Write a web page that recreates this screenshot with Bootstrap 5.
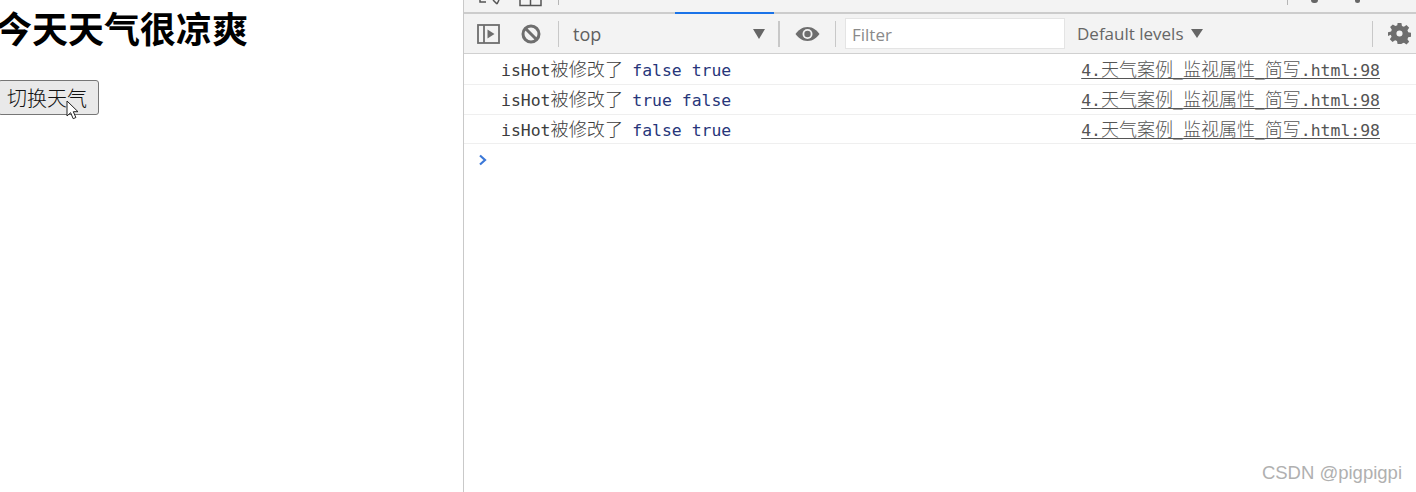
<!DOCTYPE html>
<html lang="zh">
<head>
<meta charset="utf-8">
<title>isHot</title>
<link href="https://cdn.jsdelivr.net/npm/bootstrap@5.3.0/dist/css/bootstrap.min.css" rel="stylesheet">
<style>
html,body{height:492px;overflow:hidden;background:#fff}
body{font-family:"Liberation Sans","Noto Sans CJK SC",sans-serif;color:#000}
.page-pane{width:464px;height:492px;border-right:1px solid #c9c9c9;overflow:hidden;flex:none}
.weather-title{font-size:36px;font-weight:700;line-height:44px;margin:5px 0 0 -4px;white-space:nowrap;font-family:"Noto Sans CJK SC",sans-serif}
.switch-btn{display:inline-block;position:relative;margin:31px 0 0 -2px;width:101px;height:35px;background:#e9e9e9;border:1px solid #767676;border-radius:3px;font-size:20px;line-height:32px;padding:0 0 0 8px;text-align:left;color:#111;font-family:"Noto Sans CJK SC",sans-serif;font-weight:300}
.mouse-arrow{position:absolute;left:67px;top:19px}
.dev-pane{height:492px;position:relative;min-width:0}
.tab-strip{height:14px;background:#f3f3f3;border-bottom:2px solid #ccc;position:relative;flex:none}
.tab-active{position:absolute;left:211px;width:99px;bottom:-2px;height:2px;background:#1a73e8}
.strip-ico{position:absolute;top:0}
.strip-sep{position:absolute;top:0;width:1px;height:5px;background:#b5b5b5}
.strip-dot{position:absolute;top:0;height:3px;background:#666;border-radius:0 0 3px 3px}
.tool-strip{height:40px;background:#f3f3f3;border-bottom:1px solid #d0d0d0;color:#5f5f5f;font-size:18px;font-family:"Open Sans","Noto Sans",sans-serif;flex:none;position:relative}
.tool-sep{width:1px;height:26px;background:#c8c8c8;flex:none}
.tool-ico{flex:none;display:block}
.ctx-select{width:212px;flex:none;padding:0 6px 0 14px;line-height:24px}
.tri-down{width:0;height:0;border-left:6px solid transparent;border-right:6px solid transparent;border-top:10px solid #666;flex:none}
.filter-box{width:220px;height:31px;background:#fff;border:1px solid #e4e4e4;color:#8a8a8a;padding:0 6px;line-height:31px;flex:none;font-size:17px;margin-left:9px}
.level-pick{flex:none;font-size:17px;line-height:24px;color:#666}
.log-row{border-bottom:1px solid #efefef;font-family:"DejaVu Sans Mono","Noto Sans CJK SC",monospace;font-size:16.45px;color:#3c3c3c;padding-left:37px;padding-right:36px;white-space:nowrap}
.row-a{height:31px;line-height:29px}
.row-b{height:30px;line-height:27px}
.row-c{height:29px;line-height:27px}
.cjk-run{font-family:"Noto Sans CJK SC",sans-serif;font-size:18.2px;font-weight:300}
.val-run{color:#27367a;margin-left:9px}
.val-run + .val-run{margin-left:9.9px}
.src-link{color:#555;text-decoration:underline;text-underline-offset:2px}
.src-cjk{font-family:"Noto Sans CJK SC",sans-serif;font-size:18px;font-weight:300}
.prompt-row{height:32px;padding-left:14px}
.csdn-mark{position:absolute;right:14px;bottom:7px;color:#b0b0b0;font-size:18.5px;line-height:24px;font-family:"Liberation Sans",sans-serif}
</style>
</head>
<body>
<div class="d-flex">
  <div class="page-pane">
    <h1 class="weather-title">今天天气很凉爽</h1>
    <button type="button" class="switch-btn">切换天气
      <svg class="mouse-arrow" width="15" height="21" viewBox="0 0 15 21"><path d="M1 1v15l3.600-3.300 2.600 6 2.700-1.200-2.600-5.800H12z" fill="#fff" stroke="#222" stroke-width="1"/></svg>
    </button>
  </div>
  <div class="dev-pane flex-grow-1 d-flex flex-column">
    <div class="tab-strip">
      <svg class="strip-ico" style="left:15px" width="22" height="6" viewBox="0 0 22 6"><path d="M1 0v2h6M14 0l4 4M20 0l-2 4" fill="none" stroke="#555" stroke-width="1.500"/></svg>
      <svg class="strip-ico" style="left:55px" width="23" height="7" viewBox="0 0 23 7"><path d="M1 0v5.500h21V0M11.500 0v5.500" fill="none" stroke="#555" stroke-width="1.500"/></svg>
      <span class="strip-sep" style="left:94px"></span>
      <span class="tab-active"></span>
      <span class="strip-sep" style="left:823px"></span>
      <span class="strip-dot" style="left:847px;width:7px"></span>
      <span class="strip-dot" style="left:891px;width:5px"></span>
    </div>
    <div class="tool-strip d-flex align-items-center">
      <svg class="tool-ico" style="margin-left:13px" width="23" height="20" viewBox="0 0 23 20"><rect x="1" y="1" width="21" height="18" fill="none" stroke="#6e6e6e" stroke-width="1.800"/><path d="M7 1v18" stroke="#6e6e6e" stroke-width="1.800"/><path d="M10.500 5.500l7 4.500-7 4.500z" fill="#6e6e6e"/></svg>
      <svg class="tool-ico" style="margin-left:21px" width="20" height="20" viewBox="0 0 20 20"><circle cx="10" cy="10" r="8" fill="none" stroke="#6e6e6e" stroke-width="3"/><path d="M4.500 4.500l11 11" stroke="#6e6e6e" stroke-width="3"/></svg>
      <span class="tool-sep" style="margin-left:17px"></span>
      <div class="ctx-select d-flex align-items-center justify-content-between"><span>top</span><span class="tri-down"></span></div>
      <span class="tool-sep" style="margin-left:7px;width:2px"></span>
      <svg class="tool-ico" style="margin-left:15px" width="25" height="16" viewBox="0 0 25 16"><path d="M12.500 1C7 1 3 4.500.5 8c2.500 3.500 6.500 7 12 7s9.500-3.500 12-7c-2.500-3.500-6.500-7-12-7z" fill="#6e6e6e"/><circle cx="12.500" cy="8" r="5" fill="#f3f3f3"/><circle cx="12.500" cy="8" r="3.200" fill="#6e6e6e"/></svg>
      <span class="tool-sep" style="margin-left:15px"></span>
      <div class="filter-box">Filter</div>
      <div class="level-pick d-flex align-items-center" style="margin-left:12px;gap:7px"><span>Default levels</span><span class="tri-down" style="border-top-width:9px"></span></div>
      <span class="tool-sep ms-auto"></span>
      <svg class="tool-ico" style="margin:0 5px 0 15px" width="23" height="23" viewBox="0 0 24 24"><path fill="#6e6e6e" fill-rule="evenodd" d="M10 1h4l.6 3.200 2 .8L19.300 3.200l2.800 2.800-1.800 2.700.8 2 3.200.6v4l-3.200.6-.8 2 1.800 2.700-2.800 2.800-2.700-1.800-2 .8L14 23h-4l-.6-3.200-2-.8-2.700 1.800-2.800-2.800 1.800-2.700-.8-2L0 14.600v-4l3.200-.6.800-2L2.200 5.300 5 2.500l2.700 1.800 2-.8zM12 8.800a3.200 3.200 0 1 0 0 6.400 3.200 3.200 0 0 0 0-6.400z"/></svg>
    </div>
    <div class="log-row row-a d-flex justify-content-between"><span>isHot<span class="cjk-run">被修改了</span><span class="val-run">false</span><span class="val-run">true</span></span><a class="src-link" href="#">4.<span class="src-cjk">天气案例</span>_<span class="src-cjk">监视属性</span>_<span class="src-cjk">简写</span>.html:98</a></div>
    <div class="log-row row-b d-flex justify-content-between"><span>isHot<span class="cjk-run">被修改了</span><span class="val-run">true</span><span class="val-run">false</span></span><a class="src-link" href="#">4.<span class="src-cjk">天气案例</span>_<span class="src-cjk">监视属性</span>_<span class="src-cjk">简写</span>.html:98</a></div>
    <div class="log-row row-c d-flex justify-content-between"><span>isHot<span class="cjk-run">被修改了</span><span class="val-run">false</span><span class="val-run">true</span></span><a class="src-link" href="#">4.<span class="src-cjk">天气案例</span>_<span class="src-cjk">监视属性</span>_<span class="src-cjk">简写</span>.html:98</a></div>
    <div class="prompt-row d-flex align-items-center"><svg width="10" height="12" viewBox="0 0 10 12"><path d="M2 1.500L7 6l-5 4.500" fill="none" stroke="#3b78d8" stroke-width="2.200"/></svg></div>
    <div class="csdn-mark">CSDN @pigpigpi</div>
  </div>
</div>
<script src="https://cdn.jsdelivr.net/npm/bootstrap@5.3.0/dist/js/bootstrap.bundle.min.js"></script>
</body>
</html>
